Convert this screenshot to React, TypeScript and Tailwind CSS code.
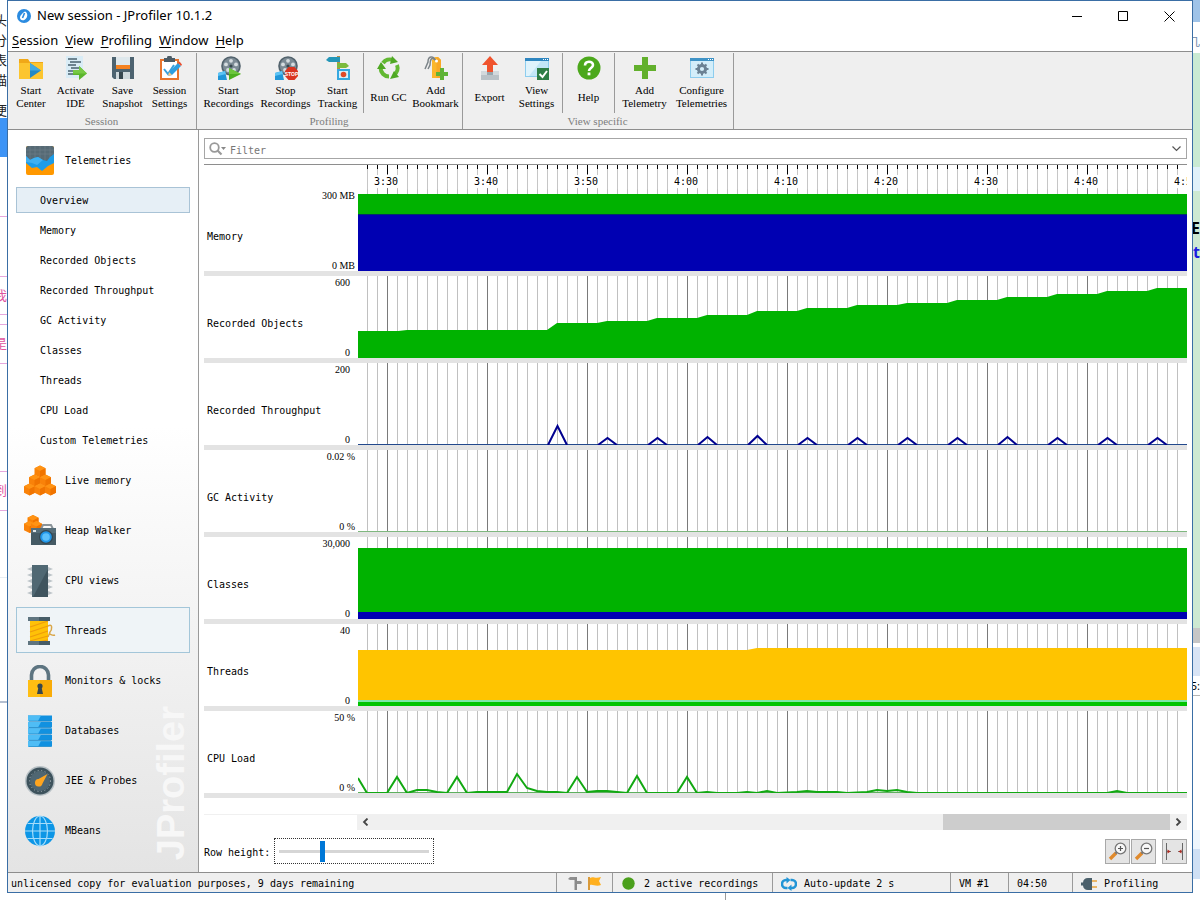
import type { ReactNode } from 'react';

const PLOT_LEFT = 358;
const GREEN = '#00b200';
const BLUE = '#0000b2';

/* ---------- toolbar icons (24x24) ---------- */

function ToolSvg({ children }: { children: ReactNode }) {
  return (
    <svg width="24" height="24" viewBox="0 0 24 24" aria-hidden="true">
      {children}
    </svg>
  );
}

const Reel = () => (
  <>
    <circle cx="14" cy="10" r="9.8" fill="#52626c" />
    <circle cx="14" cy="10" r="8.2" fill="#7c8b95" />
    <circle cx="14" cy="4.8" r="1.9" fill="#d5dce0" />
    <circle cx="9" cy="8.4" r="1.9" fill="#d5dce0" />
    <circle cx="19" cy="8.4" r="1.9" fill="#d5dce0" />
    <circle cx="11" cy="14" r="1.9" fill="#d5dce0" />
    <circle cx="17" cy="14" r="1.9" fill="#d5dce0" />
    <circle cx="14" cy="10" r="1.6" fill="#37474f" />
    <path d="M1 17l7-2 2 9H1z" fill="#2196d8" />
    <path d="M1 17l7-2 1 3-8 2z" fill="#5cc3f5" />
  </>
);

const StartCenterIcon = () => (
  <ToolSvg>
    <path d="M0 3h9l2 3h13v17H0z" fill="#f0a818" />
    <path d="M0 7h24v16H0z" fill="#fcc52f" />
    <path d="M11 7l11 7.500L11 22z" fill="#2389c4" />
    <path d="M11 7l11 7.500H11z" fill="#42a9e0" />
  </ToolSvg>
);

const ActivateIcon = () => (
  <ToolSvg>
    <path d="M2 0h17v22H2z" fill="#d9ecf6" />
    <path d="M4 3h9M6 6h11M4 9h8M7 12h8M4 15h6M4 18h6" stroke="#4a6170" strokeWidth="1.600" />
    <path d="M9 14h6v-4l8 7.500-8 6.500v-5H9z" fill="#5cb52c" />
    <path d="M15 10l8 7.500H9V14h6z" fill="#76c944" />
  </ToolSvg>
);

const SaveIcon = () => (
  <ToolSvg>
    <path d="M1 1h22v22H3l-2-2z" fill="#4d6370" />
    <path d="M5 1h14v12H5z" fill="#dfe8ec" />
    <path d="M5 9h14v4H5z" fill="#f58220" />
    <path d="M5 16h14v7H5z" fill="#cfd8dc" />
    <path d="M8 16h4v7H8z" fill="#37474f" />
  </ToolSvg>
);

const SettingsIcon = () => (
  <ToolSvg>
    <path d="M2 3h19v21H2z" fill="#e8742c" />
    <path d="M4 5h15v17H4z" fill="#fff" />
    <path d="M6 2h3a2.500 2.500 0 0 1 5 0h3v4H6z" fill="#4c5c66" />
    <path d="M6 13l4 5 6-9" stroke="#38a0dc" strokeWidth="2" fill="none" />
    <path d="M10 20l1-4 9-9 3 3-9 9z" fill="#2e9fe0" />
    <path d="M20 7l1.500-1.500 2.500 3L23 10z" fill="#ea5030" />
    <path d="M10 20l1-4 3 3z" fill="#f7c98b" />
  </ToolSvg>
);

const StartRecIcon = () => (
  <ToolSvg>
    <Reel />
    <path d="M12 12l12 6-12 6z" fill="#4caf20" />
    <path d="M12 12l12 6H12z" fill="#6cc63c" />
  </ToolSvg>
);

const StopRecIcon = () => (
  <ToolSvg>
    <Reel />
    <path d="M14.500 11h6l3.500 4v5l-3.500 4h-6L11 20v-5z" fill="#d93420" />
    <text x="17.500" y="19.500" fontSize="5" fontWeight="700" textAnchor="middle" fill="#fff" fontFamily="Liberation Sans, sans-serif">
      STOP
    </text>
  </ToolSvg>
);

const TrackingIcon = () => (
  <ToolSvg>
    <path d="M11 0h3v24h-3z" fill="#b98b45" />
    <path d="M0 4l3-3h11v5H3z" fill="#2396b8" />
    <path d="M11 7h9l3 3-3 2h-9z" fill="#7cba3d" />
    <path d="M11 13h13v11H11z" fill="#35a8e0" />
    <path d="M13 15h9v7h-9z" fill="#d7f0fb" />
    <circle cx="17.500" cy="18.500" r="2.800" fill="#e04a2a" />
  </ToolSvg>
);

const RunGcIcon = () => (
  <ToolSvg>
    <g fill="none" stroke="#62b832" strokeWidth="4">
      <path d="M6 7a8.500 8.500 0 0 1 10-3" />
      <path d="M20 9a8.500 8.500 0 0 1-3 10" />
      <path d="M12 20.500A8.500 8.500 0 0 1 3.600 12" />
    </g>
    <path d="M15 0l6 6-8 2zM22 21l-9 2 4-8zM0 13l4-7 5 7z" fill="#4fa824" />
  </ToolSvg>
);

const BookmarkIcon = () => (
  <ToolSvg>
    <path d="M8 4l3-3h3l3 3v18H8z" fill="#fbb72c" />
    <path d="M12.500 1H14l3 3v18h-4.500z" fill="#f9a825" />
    <path d="M12 5C9-1 4 0 4 6L1 13M11 4C7 0 6 5 6 9l-2 4" stroke="#7b8388" strokeWidth="1.500" fill="none" />
    <circle cx="12.500" cy="5" r="1.500" fill="#fff" />
    <path d="M16 12h4v4h4v4h-4v4h-4v-4h-4v-4h4z" fill="#5fb336" />
  </ToolSvg>
);

const ExportIcon = () => (
  <ToolSvg>
    <path d="M3 15h18v9H3z" fill="#b9c2c7" />
    <path d="M3 15h18v4H3z" fill="#d2d9dc" />
    <path d="M12 0l8 9h-5v7H9V9H4z" fill="#f0532d" />
    <path d="M9 16h6v3H9z" fill="#9aa6ad" />
  </ToolSvg>
);

const ViewSettingsIcon = () => (
  <ToolSvg>
    <path d="M0 2h24v19H0z" fill="#8dcdee" />
    <path d="M1 5h22v15H1z" fill="#dff3fc" />
    <path d="M0 2h24v3H0z" fill="#2e86c0" />
    <path d="M18 3.500h1M20 3.500h1M22 3.500h1" stroke="#fff" />
    <path d="M4 20L16 5h7v15z" fill="#c3e6f7" />
    <path d="M12 12h12v12H12z" fill="#2e7d46" />
    <path d="M14.500 18l3 3 4.500-6" stroke="#fff" strokeWidth="2" fill="none" />
  </ToolSvg>
);

const HelpIcon = () => (
  <ToolSvg>
    <circle cx="12" cy="12" r="11.500" fill="#4ca81c" />
    <path d="M8 9.500C8 4.500 16 4.500 16 9c0 3-4 3-4 6" stroke="#fff" strokeWidth="2.600" fill="none" />
    <path d="M10.600 16.500h2.800v2.800h-2.800z" fill="#fff" />
  </ToolSvg>
);

const PlusIcon = () => (
  <ToolSvg>
    <path d="M9 1h6v8h8v6h-8v8H9v-8H1V9h8z" fill="#62b02c" />
  </ToolSvg>
);

const ConfigureIcon = () => (
  <ToolSvg>
    <path d="M0 2h24v20H0z" fill="#8dcdee" />
    <path d="M1 5h22v16H1z" fill="#d3eefa" />
    <path d="M0 2h24v3H0z" fill="#3f93c6" />
    <path d="M18 3.500h1M20 3.500h1M22 3.500h1" stroke="#fff" />
    <circle cx="12" cy="13" r="3.600" fill="none" stroke="#6b8294" strokeWidth="3" />
    <path d="M12 6.500v3M12 16.500v3M5.500 13h3M15.500 13h3M7.500 8.500l2 2M14.500 15.500l2 2M16.500 8.500l-2 2M9.500 15.500l-2 2" stroke="#6b8294" strokeWidth="2" />
  </ToolSvg>
);

/* ---------- sidebar icons (32x32) ---------- */

function NavSvg({ children }: { children: ReactNode }) {
  return (
    <svg width="32" height="32" viewBox="0 0 32 32" className="shrink-0" aria-hidden="true">
      {children}
    </svg>
  );
}

function Hex({ x, y }: { x: number; y: number }) {
  return (
    <g transform={`translate(${x} ${y})`}>
      <path d="M0-6L5.500-3.200v6.400L0 6-5.500 3.200v-6.400z" fill="#f98209" />
      <path d="M0-6L5.500-3.200 0-0.500-5.500-3.200z" fill="#ff9314" />
      <path d="M0-0.500l5.500-2.700v6.400L0 6z" fill="#f07400" />
    </g>
  );
}

const TelemetriesIcon = () => (
  <NavSvg>
    <rect x="2" y="1" width="28" height="29" rx="2" fill="#ff9800" />
    <path d="M2 14V3q0-2 2-2h24q2 0 2 2v13H2z" fill="#566a75" />
    <path d="M6 1v14M11 1v14M16 1v14M21 1v14M26 1v14M2 5h28M2 9h28" stroke="#6f828c" strokeWidth="0.600" />
    <path d="M2 11l4 4 4-2 4-1 5 3 4 1 3-4 4-3v9l-6 3-6 5-5-4-5 1-6-5z" fill="#1c9ce8" />
    <path d="M2 11l4 4 4-2 4-1 5 3-6 5-5-2-6-1z" fill="#3fb0f2" />
  </NavSvg>
);

const LiveMemoryIcon = () => (
  <NavSvg>
    <Hex x={16} y={6.5} />
    <Hex x={10.5} y={15.5} />
    <Hex x={21.5} y={15.5} />
    <Hex x={5.5} y={24.500} />
    <Hex x={16} y={24.500} />
    <Hex x={26.500} y={24.500} />
  </NavSvg>
);

const HeapWalkerIcon = () => (
  <NavSvg>
    <Hex x={9} y={6} />
    <Hex x={5.500} y={12} />
    <Hex x={12.500} y={12} />
    <path d="M17 14l2-4h8l2 4" fill="none" stroke="#8b9499" strokeWidth="2" />
    <path d="M7 13h25v17H7z" fill="#455a64" />
    <path d="M7 13h25v5H7z" fill="#566d78" />
    <circle cx="22" cy="22" r="7" fill="#35464f" />
    <circle cx="22" cy="22" r="5.800" fill="#2196e8" />
    <circle cx="22" cy="22" r="3.800" fill="#5cc0fb" />
    <path d="M9 15h3v2H9z" fill="#dfe5e8" />
  </NavSvg>
);

const CpuIcon = () => (
  <NavSvg>
    <path d="M3 4l5-2v4zM3 10l5-2v4zM3 16l5-2v4zM3 22l5-2v4zM3 28l5-2v4zM29 4l-5-2v4zM29 10l-5-2v4zM29 16l-5-2v4zM29 22l-5-2v4zM29 28l-5-2v4z" fill="#bcc4c8" />
    <path d="M8 0h16v32H8z" fill="#3f545e" />
    <path d="M8 0h16v4L9 32H8z" fill="#506873" />
  </NavSvg>
);

const ThreadsIcon = () => (
  <NavSvg>
    <path d="M24 11c5-3 4 4 2 6s3 4 5 3M26 17l-2 5" stroke="#d9a648" strokeWidth="1.500" fill="none" />
    <path d="M6 4h18v23H6z" fill="#ffc107" />
    <path d="M6 12l18-6M6 17l18-6M6 22l18-6M6 26l18-5M14 27l10-2" stroke="#ee9b0c" strokeWidth="1.200" />
    <path d="M4 2h22v4H4zM4 26h22v4H4z" fill="#5f7580" />
    <path d="M15 2h11v4H15zM15 26h11v4H15z" fill="#465c67" />
  </NavSvg>
);

const LocksIcon = () => (
  <NavSvg>
    <path d="M7.500 17V10a8.500 8.500 0 0 1 17 0v7" stroke="#5d7480" strokeWidth="3.600" fill="none" />
    <path d="M4 15h24v17H4z" fill="#ffbe12" />
    <path d="M16 15h12v17H16z" fill="#f9ac08" />
    <circle cx="16" cy="21" r="2.600" fill="#37474f" />
    <path d="M14.500 22h3l1.500 7h-6z" fill="#37474f" />
  </NavSvg>
);

const DatabasesIcon = () => (
  <NavSvg>
    {[0, 6.400, 12.800, 19.200, 25.600].map((y) => (
      <g key={y}>
        <path d={`M4 ${y + 0.500}h24v5.600H4z`} fill="#1191e0" />
        <path d={`M4 ${y + 0.500}h13l-3 5.600H4z`} fill="#4fbdf5" />
        <path d={`M5 ${y + 6.200}h22`} stroke="#1c86c4" strokeWidth="0.800" />
      </g>
    ))}
  </NavSvg>
);

const ProbesIcon = () => (
  <NavSvg>
    <circle cx="16" cy="16" r="15" fill="#b7c0c5" />
    <circle cx="16" cy="16" r="13.500" fill="#3d525c" />
    <circle cx="16" cy="16" r="10" fill="#4f6672" />
    <circle cx="16" cy="16" r="10.500" fill="none" stroke="#a8b4ba" strokeDasharray="1 2.600" />
    <path d="M23.500 9l-5 9.500a3.800 3.800 0 1 1-4-4.500z" fill="#ffa51f" />
  </NavSvg>
);

const MBeansIcon = () => (
  <NavSvg>
    <circle cx="16" cy="16" r="15" fill="#0d96e6" />
    <g fill="none" stroke="#a5dcfa" strokeWidth="1.200">
      <ellipse cx="16" cy="16" rx="7.500" ry="15" />
      <path d="M16 1v30M1 16h30M3.500 8.500h25M3.500 23.500h25" />
    </g>
  </NavSvg>
);

/* ---------- data ---------- */

interface Tool {
  label: string[];
  icon: () => ReactNode;
  width: string;
}

const W_START = 'w-[42px]';
const W_TOOL = 'w-[47px]';
const W_WIDE = 'w-[57px]';

const toolGroups: { title: string; sections: Tool[][] }[] = [
  {
    title: 'Session',
    sections: [
      [
        { label: ['Start', 'Center'], icon: StartCenterIcon, width: W_START },
        { label: ['Activate', 'IDE'], icon: ActivateIcon, width: W_TOOL },
        { label: ['Save', 'Snapshot'], icon: SaveIcon, width: W_TOOL },
        { label: ['Session', 'Settings'], icon: SettingsIcon, width: W_TOOL },
      ],
    ],
  },
  {
    title: 'Profiling',
    sections: [
      [
        { label: ['Start', 'Recordings'], icon: StartRecIcon, width: W_WIDE },
        { label: ['Stop', 'Recordings'], icon: StopRecIcon, width: W_WIDE },
        { label: ['Start', 'Tracking'], icon: TrackingIcon, width: W_TOOL },
      ],
      [
        { label: ['Run GC'], icon: RunGcIcon, width: W_TOOL },
        { label: ['Add', 'Bookmark'], icon: BookmarkIcon, width: W_TOOL },
      ],
    ],
  },
  {
    title: 'View specific',
    sections: [
      [
        { label: ['Export'], icon: ExportIcon, width: W_TOOL },
        { label: ['View', 'Settings'], icon: ViewSettingsIcon, width: W_TOOL },
      ],
      [{ label: ['Help'], icon: HelpIcon, width: W_TOOL }],
      [
        { label: ['Add', 'Telemetry'], icon: PlusIcon, width: W_WIDE },
        { label: ['Configure', 'Telemetries'], icon: ConfigureIcon, width: W_WIDE },
      ],
    ],
  },
];

const telemetryViews = [
  'Overview',
  'Memory',
  'Recorded Objects',
  'Recorded Throughput',
  'GC Activity',
  'Classes',
  'Threads',
  'CPU Load',
  'Custom Telemetries',
];

const navItems = [
  { label: 'Live memory', icon: LiveMemoryIcon },
  { label: 'Heap Walker', icon: HeapWalkerIcon },
  { label: 'CPU views', icon: CpuIcon },
  { label: 'Threads', icon: ThreadsIcon },
  { label: 'Monitors & locks', icon: LocksIcon },
  { label: 'Databases', icon: DatabasesIcon },
  { label: 'JEE & Probes', icon: ProbesIcon },
  { label: 'MBeans', icon: MBeansIcon },
];

type Point = [number, number];

const toPoints = (pts: Point[]) => pts.map(([x, y]) => `${x - PLOT_LEFT},${y}`).join(' ');

// top edge of the recorded objects area: [time position, y]
const objectEdge: Point[] = [
  [358, 55], [398, 55], [407, 54], [547, 54], [557, 47], [597, 47], [607, 45], [647, 45],
  [657, 42], [697, 42], [707, 39], [747, 39], [757, 35], [797, 35], [807, 32], [847, 32],
  [857, 29], [897, 29], [907, 27], [947, 27], [957, 24], [997, 24], [1007, 21], [1047, 21],
  [1057, 18], [1097, 18], [1107, 15], [1147, 15], [1157, 12], [3000, 12],
];

const throughputPeaks: Point[] = [
  [557, 63], [607, 75], [657, 75], [707, 74], [757, 73], [807, 75], [857, 75],
  [907, 75], [957, 75], [1007, 74], [1057, 75], [1107, 75], [1157, 75],
];

const cpuLine: Point[] = [
  [358, 67], [367, 82], [387, 82], [397, 66], [407, 82], [417, 79], [427, 79], [437, 81], [447, 82],
  [457, 66], [467, 82], [477, 81], [507, 81], [517, 63], [527, 77], [537, 80], [547, 81], [557, 81],
  [567, 82], [577, 66], [587, 81], [597, 80], [607, 80], [617, 81], [627, 82], [637, 65], [647, 82],
  [677, 82], [687, 66], [697, 82], [707, 81], [717, 82], [737, 82], [747, 81], [757, 82], [767, 80],
  [777, 82], [797, 81], [807, 80], [817, 81], [837, 81], [847, 82], [867, 81], [877, 79], [887, 80],
  [897, 79], [907, 81], [917, 82], [1107, 82], [1117, 80], [1127, 82], [3000, 82],
];

const telemetryRows: { name: string; max: string; min: string; unit: boolean; plot: ReactNode }[] = [
  {
    name: 'Memory',
    max: '300 MB',
    min: '0 MB',
    unit: true,
    plot: (
      <>
        <rect y="5" width="100%" height="20" fill={GREEN} />
        <rect y="25" width="100%" height="57" fill={BLUE} />
        <rect y="25" width="100%" height="1" fill="#003366" />
      </>
    ),
  },
  {
    name: 'Recorded Objects',
    max: '600',
    min: '0',
    unit: false,
    plot: <polygon points={`0,82 ${toPoints(objectEdge)} 2642,82`} fill={GREEN} />,
  },
  {
    name: 'Recorded Throughput',
    max: '200',
    min: '0',
    unit: false,
    plot: (
      <>
        <rect y="81" width="100%" height="1" fill="#23498c" />
        {throughputPeaks.map(([x, y]) => (
          <polyline
            key={x}
            points={toPoints([[x - 9, 82], [x + 0.5, y], [x + 10, 82]])}
            fill="none"
            stroke="#00008f"
            strokeWidth="2"
          />
        ))}
      </>
    ),
  },
  {
    name: 'GC Activity',
    max: '0.02 %',
    min: '0 %',
    unit: true,
    plot: <rect y="81" width="100%" height="1" fill="#7fb77f" />,
  },
  {
    name: 'Classes',
    max: '30,000',
    min: '0',
    unit: false,
    plot: (
      <>
        <rect y="11" width="100%" height="64" fill={GREEN} />
        <rect y="75" width="100%" height="7" fill={BLUE} />
      </>
    ),
  },
  {
    name: 'Threads',
    max: '40',
    min: '0',
    unit: false,
    plot: (
      <>
        <polygon points="0,82 0,26 389,26 399,24 2642,24 2642,82" fill="#ffc400" />
        <rect y="76" width="100%" height="2" fill="#7de8a8" />
        <rect y="78" width="100%" height="4" fill="#00c400" />
      </>
    ),
  },
  {
    name: 'CPU Load',
    max: '50 %',
    min: '0 %',
    unit: true,
    plot: (
      <>
        <rect y="81" width="100%" height="1" fill="#5fb05f" />
        <polyline points={toPoints(cpuLine)} fill="none" stroke="#12a812" strokeWidth="2" />
      </>
    ),
  },
];

const timeLabels = ['3:30', '3:40', '3:50', '4:00', '4:10', '4:20', '4:30', '4:40', '4:50'];

/* ---------- parts ---------- */

function TitleBar() {
  return (
    <header className="flex h-[30px] items-center bg-white pl-[9px]">
      <svg width="14" height="14" viewBox="0 0 14 14" aria-hidden="true">
        <circle cx="7" cy="7" r="7" fill="#2b8be0" />
        <path d="M8 2.500c3 1 3 6 0 8s-5 0-5-2 3-5 5-6z" fill="#fff" />
        <path d="M7.500 4l-2 5" stroke="#2b8be0" strokeWidth="1.600" />
      </svg>
      <h1 className="flex-1 pl-[6px] text-[13px] text-black">New session - JProfiler 10.1.2</h1>
      <button aria-label="Minimize" className="flex h-full w-[46px] items-center justify-center">
        <svg width="10" height="10" viewBox="0 0 10 10">
          <path d="M0 5.500h10" stroke="#000" />
        </svg>
      </button>
      <button aria-label="Maximize" className="flex h-full w-[46px] items-center justify-center">
        <svg width="10" height="10" viewBox="0 0 10 10">
          <path d="M0.500 0.500h9v9h-9z" stroke="#000" fill="none" />
        </svg>
      </button>
      <button aria-label="Close" className="flex h-full w-[46px] items-center justify-center">
        <svg width="11" height="11" viewBox="0 0 11 11">
          <path d="M0.500 0.500l10 10M10.500 0.500l-10 10" stroke="#000" />
        </svg>
      </button>
    </header>
  );
}

function MenuBar() {
  return (
    <nav className="flex h-5 items-center gap-[7px] bg-white pl-1 text-[13px] text-black">
      {['Session', 'View', 'Profiling', 'Window', 'Help'].map((item) => (
        <button key={item}>
          <span className="underline underline-offset-2">{item[0]}</span>
          {item.slice(1)}
        </button>
      ))}
    </nav>
  );
}

function ToolButton({ tool }: { tool: Tool }) {
  const Icon = tool.icon;
  return (
    <button className={`flex shrink-0 flex-col items-center ${tool.width}`}>
      <Icon />
      <span className="mt-1 flex h-[26px] flex-col justify-center whitespace-nowrap text-[11px] leading-[13px]">
        {tool.label.map((line) => (
          <span key={line}>{line}</span>
        ))}
      </span>
    </button>
  );
}

function Toolbar() {
  return (
    <div className="flex h-[79px] border-y border-[#8e8e8e] bg-[#efefef] pt-px font-['Liberation_Serif','Noto_Sans_CJK_SC',serif] text-black">
      {toolGroups.map((group) => (
        <section key={group.title} className="flex flex-col border-r border-[#9a9a9a] pr-[2px] pl-px">
          <div className="flex h-[60px]">
            {group.sections.map((section, i) => (
              <div
                key={i}
                className={
                  i < group.sections.length - 1
                    ? 'flex border-r border-[#9a9a9a] px-[2px] pt-[3px]'
                    : 'flex px-px pt-[3px]'
                }
              >
                {section.map((tool) => (
                  <ToolButton key={tool.label.join(' ')} tool={tool} />
                ))}
              </div>
            ))}
          </div>
          <h2 className="text-center text-[11px] leading-[16px] text-[#7d7d7d]">{group.title}</h2>
        </section>
      ))}
    </div>
  );
}

function Sidebar() {
  return (
    <aside className="relative flex w-[191px] shrink-0 flex-col gap-1 border-r border-[#9a9a9a] bg-linear-to-b from-white from-40% to-[#e4e4e4] pt-[7px] pr-2 pl-2">
      <span className="absolute right-2 bottom-3 rotate-180 text-[38px] leading-[38px] font-bold text-[#f7f7f7] [font-family:'Liberation_Sans',sans-serif] [writing-mode:vertical-rl]">
        JProfiler
      </span>
      <button className="flex h-[46px] items-center gap-[9px] pt-[2px] pl-2 text-left">
        <TelemetriesIcon />
        Telemetries
      </button>
      {telemetryViews.map((view) => (
        <button
          key={view}
          className={
            view === 'Overview'
              ? 'h-[26px] border border-[#a9c3d6] bg-[#e6eff6] pt-[2px] pl-[23px] text-left'
              : 'h-[26px] border border-transparent pt-[2px] pl-[23px] text-left'
          }
        >
          {view}
        </button>
      ))}
      {navItems.map(({ label, icon: Icon }) => (
        <button
          key={label}
          className={
            label === 'Threads'
              ? 'relative flex h-[46px] items-center gap-[9px] border border-[#a3c6d9] bg-[#eff4f7] pt-[2px] pl-[7px] text-left'
              : 'relative flex h-[46px] items-center gap-[9px] border border-transparent pt-[2px] pl-[7px] text-left'
          }
        >
          <Icon />
          {label}
        </button>
      ))}
    </aside>
  );
}

function Ruler() {
  return (
    <div className="flex h-[25px] border-t border-[#8e8e8e]">
      <div className="w-[154px] shrink-0" />
      <svg className="h-[29px] min-w-0 flex-1" aria-label="Time scale">
        <defs>
          <pattern id="minor" x="9" width="10" height="29" patternUnits="userSpaceOnUse">
            <path d="M0.500 0v29" stroke="#c6c6c6" />
            <path d="M0.500 0v4" stroke="#000" />
          </pattern>
        </defs>
        <rect x="9" width="100%" height="29" fill="url(#minor)" />
        {timeLabels.map((label, i) => (
          <g key={label}>
            <path d={`M${29.5 + i * 100} 0v29`} stroke="#808080" />
            <path d={`M${29.5 + i * 100} 0v9`} stroke="#000" />
            <rect x={16 + i * 100} y="10" width="25" height="13" fill="#fff" />
            <text x={28 + i * 100} y="20" fontSize="10" textAnchor="middle">
              {label}
            </text>
          </g>
        ))}
      </svg>
    </div>
  );
}

function TelemetryRow({ row }: { row: (typeof telemetryRows)[number] }) {
  return (
    <div className="flex border-b-[5px] border-[#e3e3e3]">
      <div className="flex w-[154px] shrink-0 items-center justify-between pl-[3px]">
        <span className="pt-[14px]">{row.name}</span>
        <span
          className={
            row.unit
              ? "flex h-full flex-col justify-between pt-[2px] pr-[3px] text-right font-['Liberation_Serif',serif] text-[10px] leading-[10px]"
              : "flex h-full flex-col justify-between pt-[2px] pr-2 text-right font-['Liberation_Serif',serif] text-[10px] leading-[10px]"
          }
        >
          <span>{row.max}</span>
          <span>{row.min}</span>
        </span>
      </div>
      <svg className="h-[82px] min-w-0 flex-1" aria-label={row.name}>
        <defs>
          <pattern id="grid" x="29" width="100" height="82" patternUnits="userSpaceOnUse">
            <path
              d="M10.500 0v82M20.500 0v82M30.500 0v82M40.500 0v82M50.500 0v82M60.500 0v82M70.500 0v82M80.500 0v82M90.500 0v82"
              stroke="#c0c0c0"
            />
            <path d="M0.500 0v82" stroke="#7a7a7a" />
          </pattern>
        </defs>
        <rect width="100%" height="82" fill="url(#grid)" />
        {row.plot}
      </svg>
    </div>
  );
}

function HorizontalScrollbar() {
  return (
    <div className="mt-4 flex">
      <div className="w-[153px] shrink-0 border-t border-[#f0f0f0]" />
      <div className="flex h-4 flex-1 items-stretch bg-[#f0f0f0]">
        <button aria-label="Scroll left" className="flex w-[17px] items-center justify-center">
          <svg width="7" height="8" viewBox="0 0 7 8">
            <path d="M5.500 0.500L2 4l3.500 3.500" stroke="#444" strokeWidth="1.800" fill="none" />
          </svg>
        </button>
        <div className="flex flex-1 justify-end">
          <div className="w-[28.5%] bg-[#cdcdcd]" />
        </div>
        <button aria-label="Scroll right" className="flex w-[17px] items-center justify-center">
          <svg width="7" height="8" viewBox="0 0 7 8">
            <path d="M1.500 0.500L5 4 1.500 7.500" stroke="#444" strokeWidth="1.800" fill="none" />
          </svg>
        </button>
      </div>
    </div>
  );
}

function Magnifier({ sign }: { sign: string }) {
  return (
    <svg width="20" height="20" viewBox="0 0 20 20" aria-hidden="true">
      <path d="M2 18l6-6" stroke="#e08a2c" strokeWidth="3.400" />
      <path d="M7.500 12.500l2-2" stroke="#777" strokeWidth="2" />
      <circle cx="12.500" cy="7.500" r="5.300" fill="#f8f8f8" stroke="#777" strokeWidth="1.300" />
      <path d={sign} stroke="#555" strokeWidth="1.200" />
    </svg>
  );
}

function ViewControls() {
  const buttonClass = 'flex size-[25px] items-center justify-center border border-[#a8a8a8] bg-[#e4e4e4]';
  return (
    <div className="mt-2 flex h-[26px] items-center">
      <label htmlFor="row-height" className="w-[70px] pt-[3px]">
        Row height:
      </label>
      <div className="flex h-[26px] w-[160px] items-center border border-dotted border-[#333] px-1">
        <input
          id="row-height"
          type="range"
          min={0}
          max={100}
          defaultValue={28}
          className="h-[22px] w-full appearance-none bg-transparent bg-[linear-gradient(#d6d6d6,#d6d6d6)] bg-[length:100%_3px] bg-center bg-no-repeat [&::-webkit-slider-thumb]:h-[21px] [&::-webkit-slider-thumb]:w-[5px] [&::-webkit-slider-thumb]:appearance-none [&::-webkit-slider-thumb]:bg-[#0078d7]"
        />
      </div>
      <div className="ml-auto flex gap-px">
        <button aria-label="Zoom in" className={buttonClass}>
          <Magnifier sign="M10 7.500h5M12.500 5v5" />
        </button>
        <button aria-label="Zoom out" className={buttonClass}>
          <Magnifier sign="M10 7.500h5" />
        </button>
        <button
          aria-label="Fit to window"
          className="ml-[5px] flex size-[25px] items-center justify-center border border-[#a8a8a8] bg-[#e4e4e4]"
        >
          <svg width="19" height="19" viewBox="0 0 19 19" aria-hidden="true">
            <path d="M1.500 1v17M17.500 1v17" stroke="#666" />
            <path d="M2 9.500h4M13 9.500h4" stroke="#777" />
            <path d="M5.500 9.500l-3-2v4zM13.500 9.500l3-2v4z" fill="#b02a20" />
          </svg>
        </button>
      </div>
    </div>
  );
}

function TelemetryPanel() {
  return (
    <main className="flex min-w-0 flex-1 flex-col bg-white pt-2 pr-[5px] pl-[5px]">
      <div className="flex h-[21px] items-center border border-[#a6a6a6] pl-1">
        <svg width="18" height="14" viewBox="0 0 18 14" aria-hidden="true">
          <circle cx="5.500" cy="5.500" r="4.300" fill="none" stroke="#999" strokeWidth="1.800" />
          <path d="M8.500 8.500l4 4" stroke="#999" strokeWidth="2.200" />
          <path d="M12 5h5l-2.500 3z" fill="#888" />
        </svg>
        <input
          aria-label="Filter"
          placeholder="Filter"
          className="h-full min-w-0 flex-1 bg-transparent pt-[3px] pl-[3px] outline-none placeholder:text-[#777]"
        />
        <button aria-label="Filter history" className="flex h-full w-[19px] items-center justify-center">
          <svg width="9" height="6" viewBox="0 0 9 6">
            <path d="M0.500 0.500l4 4 4-4" stroke="#555" strokeWidth="1.200" fill="none" />
          </svg>
        </button>
      </div>
      <div className="mt-[5px]">
        <Ruler />
        {telemetryRows.map((row) => (
          <TelemetryRow key={row.name} row={row} />
        ))}
      </div>
      <HorizontalScrollbar />
      <ViewControls />
    </main>
  );
}

function StatusBar() {
  return (
    <footer className="flex h-5 items-stretch border-t border-[#8e8e8e] bg-[#efefef] *:flex *:items-center *:border-[#9a9a9a] *:pt-[2px]">
      <p className="min-w-0 flex-1 pl-[3px] whitespace-nowrap">
        unlicensed copy for evaluation purposes, 9 days remaining
      </p>
      <div className="w-[56px] justify-center gap-1 border-l">
        <svg width="16" height="15" viewBox="0 0 16 15" aria-hidden="true">
          <path d="M1 3l2-2h5v3H3zM8 5h6l1 1.500L14 8H8z" fill="#8f8f8f" />
          <path d="M7.500 1H10v13H7.500z" fill="#8a8a8a" />
        </svg>
        <svg width="15" height="15" viewBox="0 0 15 15" aria-hidden="true">
          <path d="M1 1h2v13H1z" fill="#d99a3a" />
          <path d="M3 2c3-2 5 1 11-1l-2 4 2 4c-5 2-8-1-11 0z" fill="#ffb01f" />
        </svg>
      </div>
      <p className="w-[160px] gap-[9px] border-l pl-[9px]">
        <svg width="13" height="13" viewBox="0 0 13 13" aria-hidden="true">
          <circle cx="6.500" cy="6.500" r="6.200" fill="#4ba01c" />
        </svg>
        2 active recordings
      </p>
      <p className="w-[178px] gap-[7px] border-l pl-2">
        <svg width="16" height="14" viewBox="0 0 16 14" aria-hidden="true">
          <g fill="none" stroke="#2295d6" strokeWidth="2.600">
            <path d="M6.500 11H5a4 4 0 0 1 0-8h1" />
            <path d="M9.500 3H11a4 4 0 0 1 0 8h-1" />
          </g>
          <path d="M5.500 0l4 3-4 3.500zM10.500 7.500l-4 3.500 4 3z" fill="#2295d6" />
        </svg>
        Auto-update 2 s
      </p>
      <p className="w-[58px] border-l pl-2">VM #1</p>
      <p className="w-[64px] border-l pl-2">04:50</p>
      <p className="w-[120px] gap-[7px] border-l pl-2">
        <svg width="16" height="12" viewBox="0 0 16 12" aria-hidden="true">
          <path d="M10 3h6M10 9h6" stroke="#e8a33a" strokeWidth="1.600" />
          <path d="M11 0v12H7a5 5 0 0 1-5-4.500H0v-3h2A5 5 0 0 1 7 0z" fill="#4b606b" />
        </svg>
        Profiling
      </p>
    </footer>
  );
}

/* slivers of the windows lying behind this one */

const leftSliver: { size: string; text?: string }[] = [
  { size: 'h-[12px]' },
  { size: 'h-5 text-[#222]', text: '头' },
  { size: 'h-5 text-[#222]', text: '分' },
  { size: 'h-5 text-[#222]', text: '表' },
  { size: 'h-[30px] text-[#222]', text: '描' },
  { size: 'h-4 text-[#222]', text: '便' },
  { size: 'h-[39px] bg-[#3d94f6]' },
  { size: 'h-[38px]' },
  { size: 'h-[22px] border-b border-[#e6a8dd] text-[#e0559f]', text: '，' },
  { size: 'h-[60px] border-b border-[#e6a8dd]' },
  { size: 'h-[38px] border-b border-[#e6a8dd] pt-[10px] text-[#e0559f]', text: '我' },
  { size: 'h-[10px] border-b border-[#e6a8dd]' },
  { size: 'h-[39px] border-b border-[#e6a8dd] pt-[10px] text-[#e0559f]', text: '是' },
  { size: 'h-[108px] border-b border-[#e6a8dd]' },
  { size: 'h-[39px] border-b border-[#e6a8dd] pt-[10px] text-[#e0559f]', text: '到' },
  { size: 'h-[67px] border-b border-[#e8eef2]' },
  { size: 'h-[125px] border-b-2 border-[#b4bfd0]' },
];

const rightSliver: { size: string; text?: string }[] = [
  { size: 'h-[22px] bg-[#9fc3e8]' },
  { size: 'h-[31px] bg-white pt-3 text-[11px] text-[#6c86a8]', text: '几' },
  { size: 'h-[114px] bg-[#c9ead3]' },
  { size: 'h-6 bg-[#e0f1fa]' },
  { size: 'h-[25px] bg-[#cde9d2]' },
  { size: 'h-6 bg-[#cde9d2] text-[16px] leading-6 font-bold text-black', text: 'E' },
  { size: 'h-6 bg-[#cde9d2] text-[16px] leading-6 font-bold text-[#1c1ce0]', text: 't' },
  { size: 'h-[364px] bg-[#cde9d2]' },
  { size: 'h-[15px] bg-[#c6c6c6]' },
  { size: 'h-1 bg-white' },
  { size: 'h-[29px] bg-[#d8e4f5]' },
  { size: 'h-5 border-b border-[#b5b5b5] bg-white text-[11px] leading-5 text-black', text: '5:' },
  { size: 'h-[134px] bg-white' },
  { size: 'h-[19px] bg-[#eef6fd]' },
  { size: 'h-[30px] bg-[#cfe0f5]' },
];

function Sliver({ parts }: { parts: { size: string; text?: string }[] }) {
  return (
    <div
      aria-hidden="true"
      className="w-[7px] shrink-0 overflow-hidden font-['Noto_Sans','Noto_Sans_CJK_SC',sans-serif] text-[13px] leading-4"
    >
      {parts.map((part, i) => (
        <div key={i} className={`flex justify-end overflow-hidden ${part.size}`}>
          {part.text}
        </div>
      ))}
    </div>
  );
}

export default function App() {
  return (
    <div className="flex min-h-screen items-stretch bg-white">
      <Sliver parts={leftSliver} />
      <div className="flex min-w-0 flex-1 flex-col">
        <div className="flex flex-1 flex-col border border-[#3a6ea5] font-['Noto_Sans','Noto_Sans_CJK_SC',sans-serif]">
          <TitleBar />
          <MenuBar />
          <Toolbar />
          <div className="flex flex-1 flex-col font-['DejaVu_Sans_Mono','Noto_Sans_CJK_SC',monospace] text-[10px] leading-[14px] text-black">
            <div className="flex flex-1">
              <Sidebar />
              <TelemetryPanel />
            </div>
            <StatusBar />
          </div>
        </div>
        <div className="h-[7px]">
          <div className="ml-[718px] h-full w-px bg-[#9a9a9a]" />
        </div>
      </div>
      <Sliver parts={rightSliver} />
    </div>
  );
}
